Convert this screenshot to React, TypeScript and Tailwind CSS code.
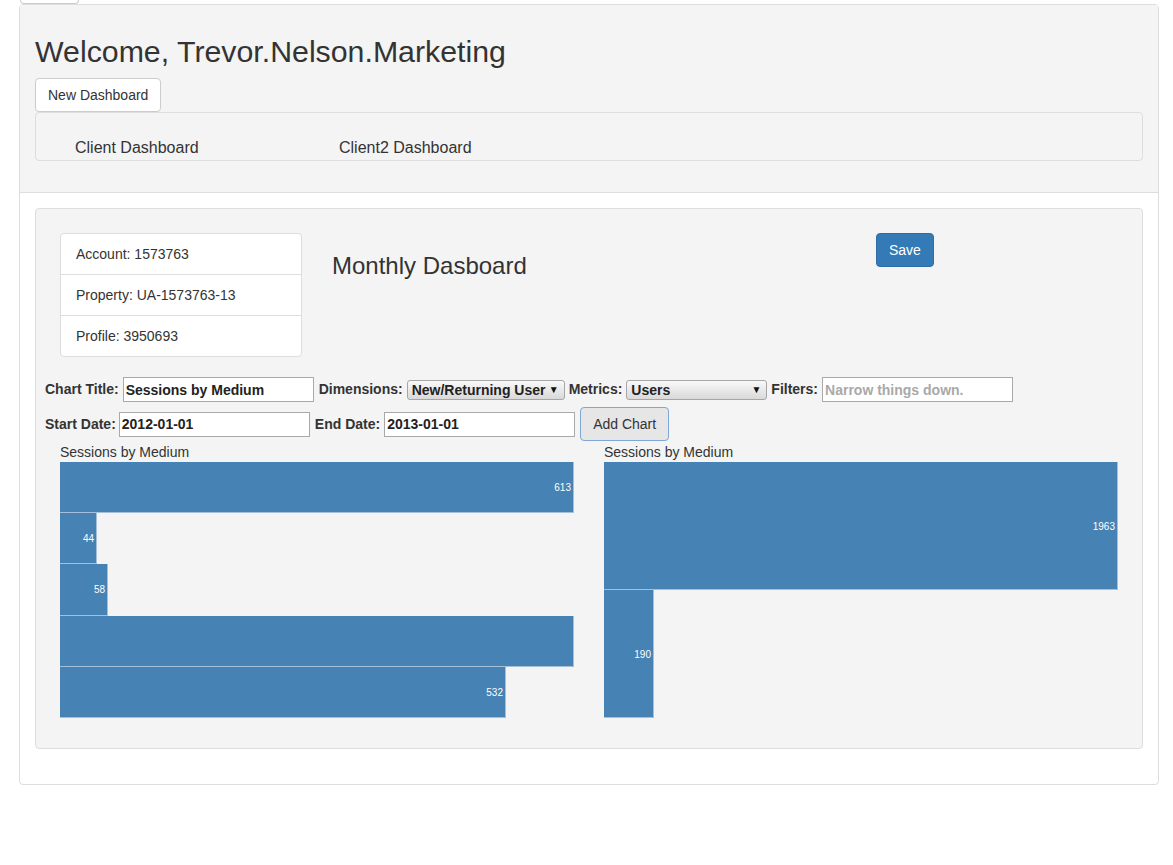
import React from "react";

type Bar = { value: number; width: number; label?: string };

const leftBars: Bar[] = [
  { value: 613, width: 514, label: "613" },
  { value: 44, width: 37, label: "44" },
  { value: 58, width: 48, label: "58" },
  { value: 700, width: 514 },
  { value: 532, width: 446, label: "532" },
];

const rightBars: Bar[] = [
  { value: 1963, width: 514, label: "1963" },
  { value: 190, width: 50, label: "190" },
];

function BarChart({ title, bars, barHeight }: { title: string; bars: Bar[]; barHeight: string }) {
  return (
    <div className="w-[514px]">
      <div className="h-[20px] leading-[20px] text-[14px]">{title}</div>
      <div className="flex flex-col">
        {bars.map((b, i) => (
          <div
            key={i}
            className={`${barHeight} flex items-center justify-end border-r border-b border-[#a3bfd9] bg-[#4682b4] pr-[2px]`}
            style={{ width: b.width }}
          >
            {b.label && <span className="mt-[2px] text-[10px] leading-none text-white">{b.label}</span>}
          </div>
        ))}
      </div>
    </div>
  );
}

function FakeSelect({ value, width }: { value: string; width: string }) {
  return (
    <div
      className={`${width} flex h-[20px] items-center justify-between rounded-[3px] border border-[#a6a6a6] bg-linear-to-b from-[#f9f9f9] to-[#d9d9d9] pl-[4px] pr-[5px] font-bold text-[14px] text-[#222]`}
    >
      <span className="leading-none">{value}</span>
      <span className="text-[10px] leading-none text-[#111]">▼</span>
    </div>
  );
}

function TextField({ value, placeholder }: { value?: string; placeholder?: string }) {
  return (
    <input
      readOnly
      defaultValue={value}
      placeholder={placeholder}
      className="h-[25px] w-[191px] border border-[#a9a9a9] bg-white px-[2px] font-bold text-[14px] text-[#222] outline-none placeholder:text-[#a9a9a9]"
    />
  );
}

export default function App() {
  return (
    <div className="min-h-screen bg-white font-['Liberation_Sans',Arial,sans-serif] text-[14px] text-[#333]">
      <div className="ml-[20px] h-[4px] w-[59px] rounded-b-[4px] border border-t-0 border-[#ccc] bg-white" />

      <div className="ml-[19px] w-[1140px] rounded-[4px] border border-[#ddd]">
        <div className="border-b border-[#ddd] bg-[#f4f4f4] px-[15px] pt-[30px] pb-[31px]">
          <h1 className="text-[30.3px] leading-[33px]">Welcome, Trevor.Nelson.Marketing</h1>
          <button className="mt-[10px] h-[34px] rounded-[4px] border border-[#ccc] bg-white px-[12px] text-[14px] text-[#333]">
            New Dashboard
          </button>
          <div className="flex h-[49px] rounded-[4px] border border-[#ddd] bg-[#f4f4f4] pt-[24px] text-[16px] leading-[22px]">
            <div className="ml-[39px] w-[264px]">Client Dashboard</div>
            <div>Client2 Dashboard</div>
          </div>
        </div>

        <div className="px-[15px] pt-[15px] pb-[35px]">
          <div className="rounded-[4px] border border-[#ddd] bg-[#f4f4f4] pt-[24px] pb-[30px]">
            <div className="ml-[24px] flex items-start">
              <div className="w-[242px] rounded-[4px] border border-[#ddd] bg-white">
                <div className="h-[41px] border-b border-[#ddd] px-[15px] leading-[40px]">Account: 1573763</div>
                <div className="h-[41px] border-b border-[#ddd] px-[15px] leading-[40px]">Property: UA-1573763-13</div>
                <div className="h-[40px] px-[15px] leading-[40px]">Profile: 3950693</div>
              </div>
              <h2 className="ml-[30px] mt-[20px] w-[544px] text-[24px] leading-[26px]">Monthly Dasboard</h2>
              <button className="h-[34px] rounded-[4px] border border-[#2e6da4] bg-[#337ab7] px-[12px] text-[14px] text-white">
                Save
              </button>
            </div>

            <div className="ml-[9px] mt-[19px] flex h-[27px] items-center gap-[4px] font-bold">
              <span>Chart Title:</span>
              <TextField value="Sessions by Medium" />
              <span className="ml-px">Dimensions:</span>
              <FakeSelect value="New/Returning User" width="w-[158px]" />
              <span>Metrics:</span>
              <FakeSelect value="Users" width="w-[141px]" />
              <span>Filters:</span>
              <TextField placeholder="Narrow things down." />
            </div>

            <div className="ml-[9px] mt-[4px] flex h-[34px] items-center gap-[4px] font-bold">
              <span className="mr-[-1px]">Start Date:</span>
              <TextField value="2012-01-01" />
              <span className="ml-px">End Date:</span>
              <TextField value="2013-01-01" />
              <button className="ml-px h-[34px] rounded-[4px] border border-[#7ea7d8] bg-[#e6e6e6] px-[12px] font-normal text-[14px] text-[#333]">
                Add Chart
              </button>
            </div>

            <div className="ml-[24px] mt-[1px] flex gap-[30px]">
              <BarChart title="Sessions by Medium" bars={leftBars} barHeight="h-[51.2px]" />
              <BarChart title="Sessions by Medium" bars={rightBars} barHeight="h-[128px]" />
            </div>
          </div>
        </div>
      </div>
    </div>
  );
}
